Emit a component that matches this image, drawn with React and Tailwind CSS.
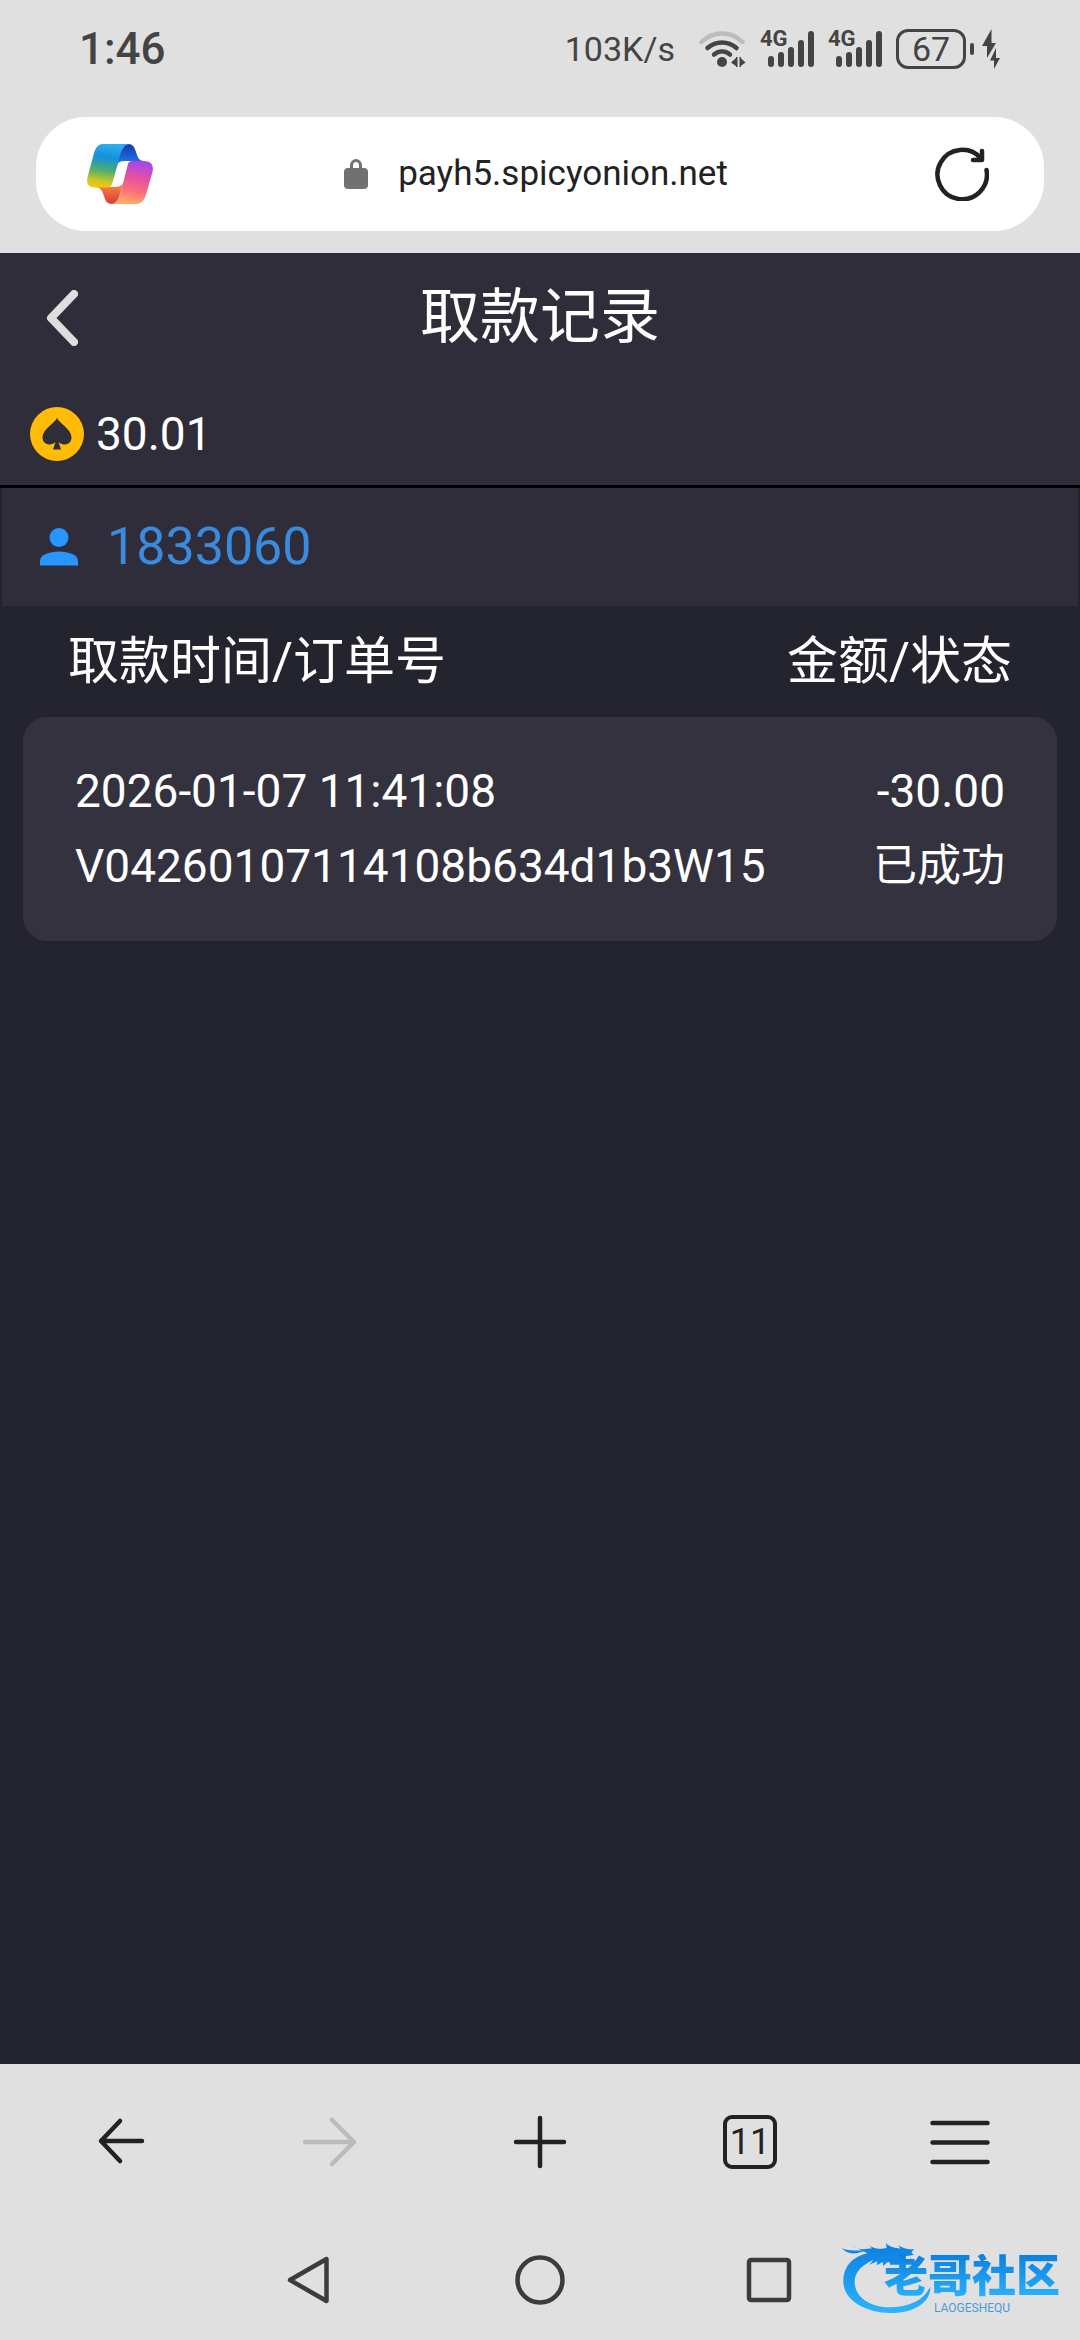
import React from "react";

const records = [
  {
    time: "2026-01-07 11:41:08",
    order: "V04260107114108b634d1b3W15",
    amount: "-30.00",
    status: "已成功",
  },
];

function WifiIcon() {
  return (
    <svg className="h-9 w-[47px]" viewBox="0 0 47 36" fill="none" aria-hidden="true">
      <g strokeWidth="4.500" strokeLinecap="round">
        <path d="M2.500 11C14 -0.500 32 -0.500 43.500 11" stroke="#bcbcbc" />
        <path d="M8.500 17C17 9.500 29 9.500 37.500 17" stroke="#444" />
        <path d="M15 23.500C20 19.500 26 19.500 31 23.500" stroke="#444" />
      </g>
      <circle cx="23" cy="31" r="5" fill="#444" />
      <path d="M32 31.500L37.500 26.500V35.500ZM41 26.500L46.500 31.500L41 35.500Z" fill="#444" />
      <path d="M37 26h1.500v10h-1.500zM40.500 26h1.500v10h-1.500z" fill="#444" />
    </svg>
  );
}

function Signal() {
  return (
    <span className="relative block h-9 w-[54px]">
      <span className="absolute -top-1 left-0 text-[22px] leading-6 font-bold">4G</span>
      <svg className="h-9 w-[54px]" viewBox="0 0 54 36" fill="#444" aria-hidden="true">
        <rect x="8" y="25" width="6" height="11" rx="3" />
        <rect x="18" y="21" width="6" height="15" rx="3" />
        <rect x="28" y="16" width="6" height="20" rx="3" />
        <rect x="38" y="9" width="6" height="27" rx="3" />
        <rect x="48" y="0" width="6" height="36" rx="3" />
      </svg>
    </span>
  );
}

function Battery() {
  return (
    <span className="flex items-center gap-1">
      <span className="flex h-10 w-[70px] items-center justify-center rounded-xl border-3 border-[#444] text-[34px] leading-9">
        67
      </span>
      <span className="h-3 w-1 rounded-sm bg-[#444]" />
    </span>
  );
}

function BoltIcon() {
  return (
    <svg className="h-10 w-[18px]" viewBox="0 0 18 40" fill="#444" aria-hidden="true">
      <path d="M9.500 0L0 17h5V29L14 14H9.500Z" />
      <path d="M14 19L8 31.500h4V40L18 29H14Z" />
    </svg>
  );
}

function CopilotLogo() {
  return (
    <svg className="h-[60px] w-[66px]" viewBox="0 0 66 60" aria-hidden="true">
      <defs>
        <linearGradient id="cool" x1="0.550" y1="0" x2="0.400" y2="1">
          <stop offset="0" stopColor="#2fb0ee" />
          <stop offset="0.300" stopColor="#1291dd" />
          <stop offset="0.620" stopColor="#52ad6c" />
          <stop offset="0.850" stopColor="#c5c62a" />
          <stop offset="1" stopColor="#fbc60f" />
        </linearGradient>
        <linearGradient id="deep" x1="0.500" y1="0" x2="0.400" y2="1">
          <stop offset="0" stopColor="#1438b4" />
          <stop offset="1" stopColor="#2476e6" />
        </linearGradient>
        <linearGradient id="warm" x1="0.650" y1="0" x2="0.450" y2="1">
          <stop offset="0" stopColor="#a445f0" />
          <stop offset="0.400" stopColor="#e8519b" />
          <stop offset="0.700" stopColor="#fb6f7a" />
          <stop offset="1" stopColor="#ffac6a" />
        </linearGradient>
        <linearGradient id="ember" x1="0.500" y1="0" x2="0.500" y2="1">
          <stop offset="0" stopColor="#ff8a3c" />
          <stop offset="1" stopColor="#d63c3c" />
        </linearGradient>
      </defs>
      <path d="M30 20C32 9 34 0 41 0C46 0 47.500 3 49 8C50.500 13 52 17 57 17H38C34 17 31.500 18 30 20Z" fill="url(#deep)" />
      <path d="M7 43H27C32 43 34 42 36 39L33 50C31 57 29 60 25 60C20 60 18.500 57 17 52C15 46 13 43 7 43Z" fill="url(#ember)" />
      <path d="M16 0H42C36 1 33.500 8 32 16L25 40C24.500 42 23 43.500 20 43.500H8C2 43.500 -1 40 0.500 33L6 13C8 5 10 0 16 0Z" fill="url(#cool)" />
      <path d="M45 17H57C64 17 67 21 65.500 28L60 47C58 55 55 60 49 60H25C30 59 32 54 34 47L41 20C41.500 18 43 17 45 17Z" fill="url(#warm)" />
    </svg>
  );
}

function LockIcon() {
  return (
    <svg className="h-[30px] w-6" viewBox="0 0 24 30" aria-hidden="true">
      <rect x="0" y="9" width="24" height="21" rx="4" fill="#717171" />
      <path d="M7.500 10V6.500a4.500 5 0 0 1 9 0V10" fill="none" stroke="#717171" strokeWidth="3" />
    </svg>
  );
}

function ReloadIcon() {
  return (
    <svg
      className="h-[54px] w-[54px]"
      viewBox="0 0 54 54"
      fill="none"
      stroke="#222"
      strokeWidth="4.500"
      strokeLinecap="round"
      strokeLinejoin="round"
      aria-hidden="true"
    >
      <path d="M51.500 23A24.700 24.700 0 1 1 46 11.500" />
      <path d="M47 4V13H38" />
    </svg>
  );
}

function CoinIcon() {
  return (
    <svg className="h-[54px] w-[54px]" viewBox="0 0 54 54" aria-hidden="true">
      <circle cx="27" cy="27" r="27" fill="#ffbb05" />
      <path
        d="M27 11C29 16 41.500 22 41.500 30.500C41.500 35 38 37.500 34.500 37.500C32 37.500 30 36.500 28.500 35L31 42.500H23L25.500 35C24 36.500 22 37.500 19.500 37.500C16 37.500 12.500 35 12.500 30.500C12.500 22 25 16 27 11Z"
        fill="#2e2d39"
      />
    </svg>
  );
}

function UserIcon() {
  return (
    <svg className="h-[38px] w-[38px]" viewBox="0 0 38 38" fill="#2996ff" aria-hidden="true">
      <circle cx="19" cy="9.500" r="9.500" />
      <path d="M0 37.500V33C0 27 9 23.500 19 23.500S38 27 38 33V37.500Z" />
    </svg>
  );
}

function StrokeIcon({ children, className }) {
  return (
    <svg
      className={className}
      viewBox="0 0 60 60"
      fill="none"
      strokeWidth="4.500"
      strokeLinecap="round"
      strokeLinejoin="round"
      aria-hidden="true"
    >
      {children}
    </svg>
  );
}

function CommunityLogo() {
  return (
    <div className="absolute top-2.5 right-0 h-[100px] w-[250px]">
      <svg className="h-[100px] w-[250px]" viewBox="0 0 750 300" aria-hidden="true">
        <defs>
          <linearGradient id="sea" x1="0" y1="0" x2="0" y2="1">
            <stop offset="0" stopColor="#0b7fe0" />
            <stop offset="1" stopColor="#2cb4fb" />
          </linearGradient>
        </defs>
        <path
          d="M35 55C60 66 85 58 104 63L82 69C62 73 46 66 35 55ZM66 46C85 61 105 58 126 55L118 48C140 58 156 58 170 54L168 40C178 51 192 54 212 56L205 46C220 55 236 60 252 57L244 68L252 74C232 79 218 77 206 82L220 88L246 86L240 98C224 101 210 94 198 92L206 102C190 98 182 96 172 97L160 108L158 96L140 106L142 94L118 104L130 90C98 104 76 124 74 152C72 196 112 230 176 232C240 232 280 210 301 171C302 218 250 250 182 249C104 248 40 210 40 154C40 108 70 80 112 70Z"
          fill="url(#sea)"
        />
      </svg>
      <div className="absolute top-6 left-[54px] flex flex-col">
        <span className="bg-linear-to-b from-[#0b7fe0] to-[#2cb4fb] bg-clip-text text-[44px] leading-[46px] font-black whitespace-nowrap text-transparent">
          老哥社区
        </span>
        <span className="pl-[50px] text-[12px] leading-4 whitespace-nowrap text-[#4a9bd8]">LAOGESHEQU</span>
      </div>
    </div>
  );
}

const toolButton = "flex h-[100px] flex-1 items-center justify-center";

export default function App() {
  return (
    <div className="flex min-h-screen flex-col bg-[#24242e] font-[Roboto,'Noto_Sans_CJK_SC',sans-serif]">
      <header className="bg-[#e0e0e0] px-9 pb-[22px] text-[#444]">
        <div className="flex h-[117px] items-center justify-between pr-11 pb-[19px] pl-[43px]">
          <time className="text-[44px] leading-[50px] font-medium">1:46</time>
          <div className="flex items-center">
            <span className="mr-6 text-[34px] leading-[50px]">103K/s</span>
            <WifiIcon />
            <span className="ml-[14px] flex gap-[14px]">
              <Signal />
              <Signal />
            </span>
            <span className="ml-[14px] flex items-center gap-2">
              <Battery />
              <BoltIcon />
            </span>
          </div>
        </div>
        <div className="flex h-[114px] items-center justify-between rounded-[50px] bg-white px-[51px] text-[#222]">
          <button aria-label="Copilot">
            <CopilotLogo />
          </button>
          <button className="flex items-center gap-[30px] pr-4 text-[35px] leading-[50px]">
            <LockIcon />
            payh5.spicyonion.net
          </button>
          <button aria-label="刷新" className="mr-1">
            <ReloadIcon />
          </button>
        </div>
      </header>

      <main className="flex-1 text-white">
        <div className="flex h-[130px] items-center justify-between bg-[#2e2d39] px-10">
          <button aria-label="返回" className="flex w-11 justify-center">
            <svg
              className="h-14 w-8"
              viewBox="0 0 32 56"
              fill="none"
              stroke="#dededf"
              strokeWidth="8"
              strokeLinecap="round"
              strokeLinejoin="round"
              aria-hidden="true"
            >
              <path d="M28 4L5 28L28 52" />
            </svg>
          </button>
          <h1 className="text-[60px] leading-[72px]">取款记录</h1>
          <span className="w-11" />
        </div>
        <div className="flex h-[105px] items-center gap-3 border-b-3 border-black bg-[#2e2d39] px-[30px]">
          <CoinIcon />
          <span className="text-[46px] leading-[54px]">30.01</span>
        </div>
        <div className="flex h-[118px] items-center gap-[29px] border-x-2 border-[#24242e] bg-[#2e2d39] px-[38px]">
          <UserIcon />
          <span className="text-[52px] leading-[60px] text-[#3a8ade]">1833060</span>
        </div>
        <div className="px-[23px]">
          <table className="w-full border-separate border-spacing-0">
            <thead className="text-[51px] leading-[111px]">
              <tr>
                <th className="p-0 pl-[45px] text-left font-normal">取款时间/订单号</th>
                <th className="p-0 pr-[45px] text-right font-normal">金额/状态</th>
              </tr>
            </thead>
            <tbody className="text-[46px] leading-[75px]">
              {records.map((record) => (
                <tr key={record.order} className="bg-[#33323e]">
                  <td className="rounded-l-3xl py-[37px] pl-[52px]">
                    <div>{record.time}</div>
                    <div>{record.order}</div>
                  </td>
                  <td className="rounded-r-3xl py-[37px] pr-[52px] text-right">
                    <div>{record.amount}</div>
                    <div className="text-[44px]">{record.status}</div>
                  </td>
                </tr>
              ))}
            </tbody>
          </table>
        </div>
      </main>

      <footer className="bg-[#e0e0e0]">
        <nav aria-label="浏览器" className="flex h-[156px] items-center px-[15px]">
          <button aria-label="后退" className={toolButton}>
            <StrokeIcon className="h-[60px] w-[60px] stroke-[#222]">
              <path d="M52 29H11M30 9L11 29L30 49" />
            </StrokeIcon>
          </button>
          <button aria-label="前进" disabled className={toolButton}>
            <StrokeIcon className="h-[60px] w-[60px] stroke-[#bbb]">
              <path d="M5 30H54M32 8L54 30L32 52" />
            </StrokeIcon>
          </button>
          <button aria-label="新建标签页" className={toolButton}>
            <StrokeIcon className="h-[60px] w-[60px] stroke-[#222]">
              <path d="M6 30H54M30 6V54" />
            </StrokeIcon>
          </button>
          <button aria-label="标签页" className={toolButton}>
            <span className="flex h-[54px] w-[54px] items-center justify-center rounded-[9px] border-4 border-[#222] text-[36px] leading-10 text-[#222]">
              11
            </span>
          </button>
          <button aria-label="菜单" className={toolButton}>
            <StrokeIcon className="h-[60px] w-[60px] stroke-[#222]">
              <path d="M2.500 11H57.500M2.500 30.500H57.500M2.500 50H57.500" />
            </StrokeIcon>
          </button>
        </nav>
        <nav aria-label="系统" className="relative flex h-[120px] items-center justify-center gap-[170px]">
          <button aria-label="返回键">
            <StrokeIcon className="h-[60px] w-[60px] stroke-[#3c3c3c]">
              <path d="M46.500 9V51L10 30Z" />
            </StrokeIcon>
          </button>
          <button aria-label="主屏幕">
            <StrokeIcon className="h-[60px] w-[60px] stroke-[#3c3c3c]">
              <circle cx="30" cy="30" r="22.500" />
            </StrokeIcon>
          </button>
          <button aria-label="最近任务">
            <StrokeIcon className="h-[60px] w-[60px] stroke-[#3c3c3c]">
              <rect x="9" y="10" width="40" height="40" rx="2" />
            </StrokeIcon>
          </button>
          <CommunityLogo />
        </nav>
      </footer>
    </div>
  );
}
